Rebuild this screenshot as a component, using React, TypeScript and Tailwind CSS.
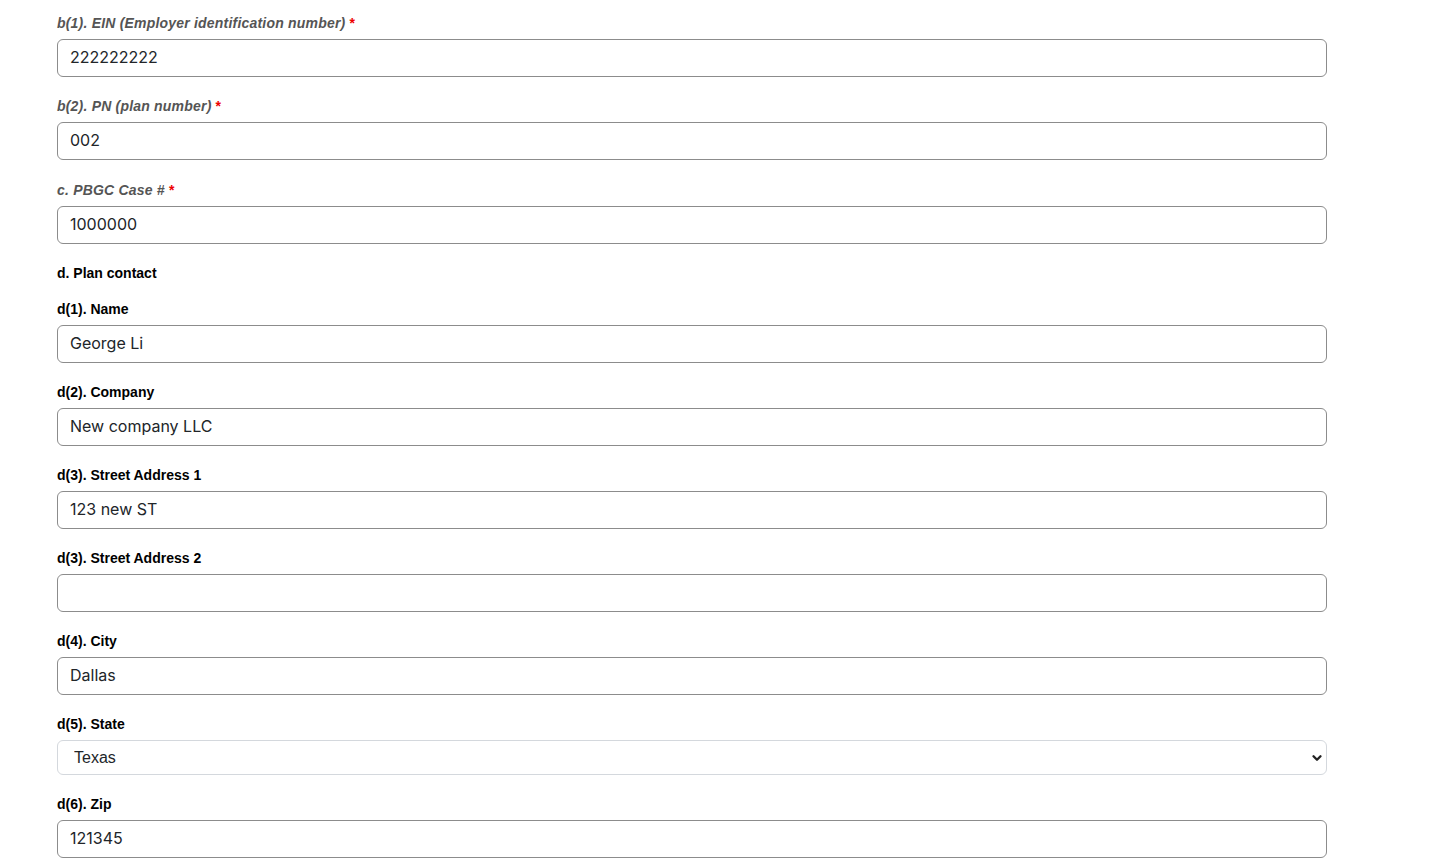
import { ChevronDown } from "lucide-react";

type Field = {
  id: string;
  label: string;
  value: string;
  required?: boolean;
  gap?: string;
};

const TOP_FIELDS: Field[] = [
  { id: "ein", label: "b(1). EIN (Employer identification number)", value: "222222222", required: true },
  { id: "pn", label: "b(2). PN (plan number)", value: "002", required: true, gap: "mb-[22px]" },
  { id: "case", label: "c. PBGC Case #", value: "1000000", required: true },
];

const CONTACT_FIELDS: Field[] = [
  { id: "name", label: "d(1). Name", value: "George Li" },
  { id: "company", label: "d(2). Company", value: "New company LLC" },
  { id: "addr1", label: "d(3). Street Address 1", value: "123 new ST" },
  { id: "addr2", label: "d(3). Street Address 2", value: "" },
  { id: "city", label: "d(4). City", value: "Dallas" },
];

const inputClass =
  "block h-[38px] w-full rounded-md border border-[#8c8c8c] bg-white px-3 pb-[2px] text-[16px] text-[#212529] outline-none [font-family:Inter,'Liberation_Sans',sans-serif]";

function TextField({ field, italic }: { field: Field; italic?: boolean }) {
  return (
    <div className={field.gap ?? "mb-[21px]"}>
      <label
        htmlFor={field.id}
        className={
          italic
            ? "mb-2 block text-[14px] font-bold italic leading-4 tracking-[0.2px] text-[#555]"
            : "mb-2 block text-[14px] font-bold leading-4 text-black"
        }
      >
        {field.label}
        {field.required && <span className="not-italic text-[#e00]"> *</span>}
      </label>
      <input id={field.id} type="text" defaultValue={field.value} className={inputClass} />
    </div>
  );
}

export default function App() {
  return (
    <div className="min-h-[867px] bg-white pl-[57px] pt-[15px] [font-family:'Liberation_Sans',Arial,sans-serif]">
      <div className="w-[1270px]">
        {TOP_FIELDS.map((f) => (
          <TextField key={f.id} field={f} italic />
        ))}

        <h3 className="mb-[19px] text-[14px] font-bold leading-[17px] text-black">
          d. Plan contact
        </h3>

        {CONTACT_FIELDS.map((f) => (
          <TextField key={f.id} field={f} />
        ))}

        <div className="mb-[21px]">
          <label htmlFor="state" className="mb-2 block text-[14px] font-bold leading-4 text-black">
            d(5). State
          </label>
          <div className="relative">
            <select
              id="state"
              defaultValue="TX"
              className="block h-[35px] w-full appearance-none rounded-md border border-[#d4d8dd] bg-white pl-4 text-[16px] text-[#212529] outline-none"
            >
              <option value="TN">Tennessee</option>
              <option value="TX">Texas</option>
              <option value="UT">Utah</option>
            </select>
            <ChevronDown
              className="pointer-events-none absolute right-[3px] top-[11px] h-[14px] w-[14px] text-[#222]"
              strokeWidth={4}
            />
          </div>
        </div>

        <TextField field={{ id: "zip", label: "d(6). Zip", value: "121345" }} />
      </div>
    </div>
  );
}
